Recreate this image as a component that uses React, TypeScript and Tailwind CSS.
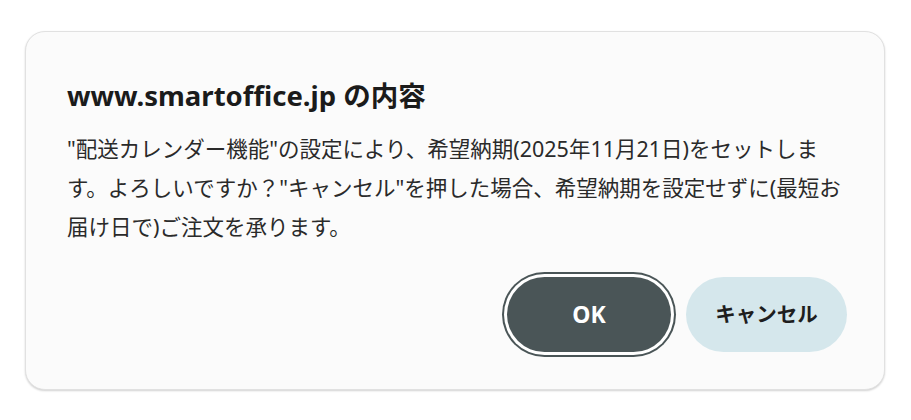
const App = () => {
  const font = { fontFamily: '"Noto Sans", "Noto Sans CJK JP", sans-serif' };

  return (
    <div className="min-h-screen bg-white pt-[31px] pl-[25px]" style={font}>
      <div className="w-[860px] h-[359px] rounded-[20px] border border-[#e1e1e1] bg-[#fbfbfb] shadow-[0_1px_2px_rgba(0,0,0,0.18)] pt-[48px] pl-[41px] pr-[37px] pb-[37px] flex flex-col">
        {/* title */}
        <h1 className="text-[27.5px] leading-[32px] font-bold text-[#1b1b1b]">
          www.smartoffice.jp の内容
        </h1>

        {/* message */}
        <p className="mt-[17px] text-[21.5px] leading-[39px] text-[#2a2a2a] whitespace-nowrap">
          "配送カレンダー機能"の設定により、希望納期(2025年11月21日)をセットしま
          <br />
          す。よろしいですか？"キャンセル"を押した場合、希望納期を設定せずに(最短お
          <br />
          届け日で)ご注文を承ります。
        </p>

        {/* buttons */}
        <div className="mt-auto flex justify-end gap-[15px]">
          <button className="w-[164px] h-[75px] rounded-full bg-[#4a5557] text-white text-[23px] font-bold ring-[2px] ring-[#4a5557] ring-offset-[3px] ring-offset-white">
            OK
          </button>
          <button className="w-[161px] h-[75px] rounded-full bg-[#d5e7ec] text-[#1e1e1e] text-[20.5px] font-bold">
            キャンセル
          </button>
        </div>
      </div>
    </div>
  );
};

export default App;
